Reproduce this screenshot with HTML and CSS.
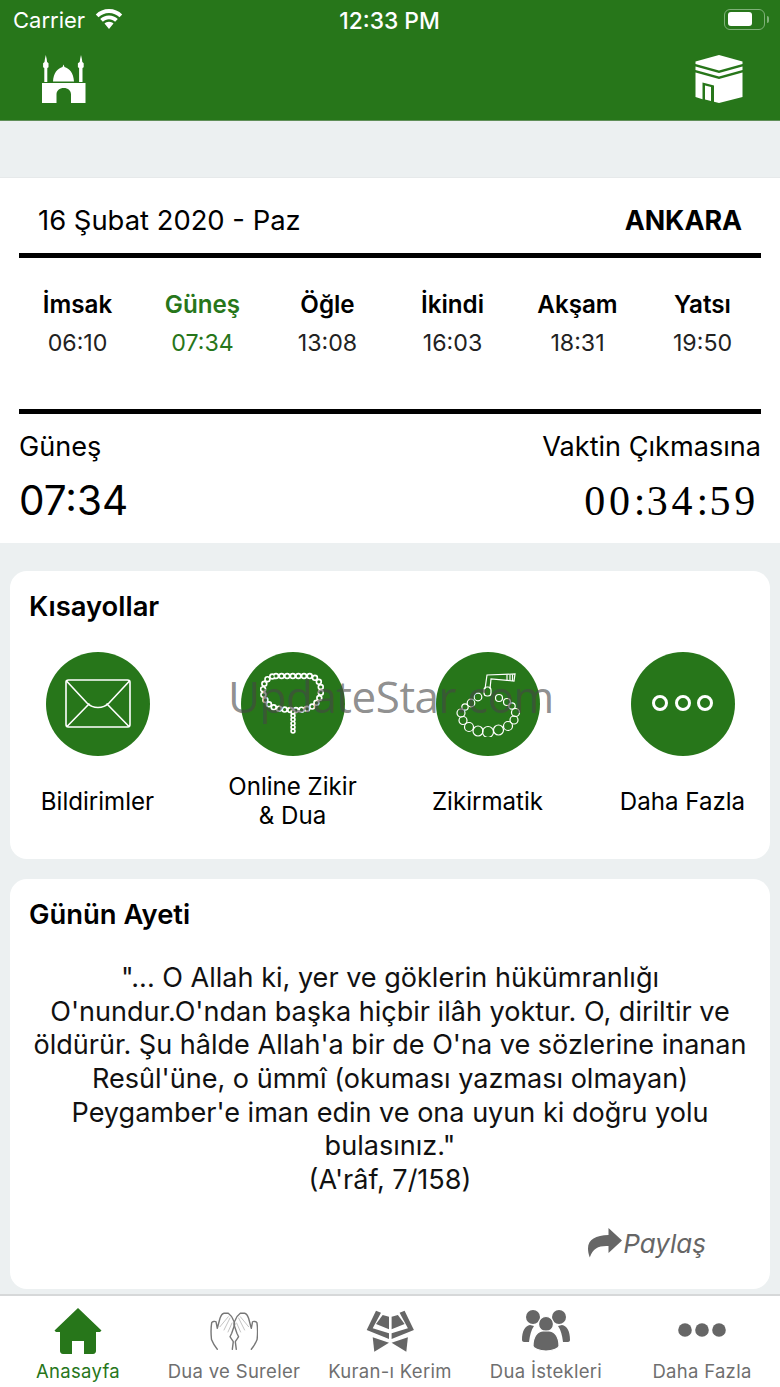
FILE: index.html
```html
<!DOCTYPE html>
<html lang="tr">
<head>
<meta charset="utf-8">
<title>Anasayfa</title>
<link rel="stylesheet" href="styles.css">
</head>
<body>
<div class="screen">
  <header class="header">
    <div class="status">
      <div class="status-left">
        <span>Carrier</span>
        <svg class="wifi" viewBox="0 0 28 22" width="28" height="22"><g fill="#fff"><path d="M14 1C8.800 1 4.200 3 .8 6.400l2.700 2.800C6.200 6.500 9.900 4.900 14 4.900s7.800 1.600 10.500 4.300l2.700-2.800C23.800 3 19.200 1 14 1z"/><path d="M14 7.400c-3.400 0-6.500 1.300-8.800 3.500l2.700 2.800c1.600-1.500 3.700-2.400 6.100-2.400s4.500.9 6.100 2.400l2.700-2.800c-2.300-2.200-5.400-3.500-8.800-3.500z"/><path d="M14 13.700c-1.800 0-3.300.7-4.500 1.800L14 21l4.500-5.500c-1.200-1.100-2.700-1.800-4.500-1.800z"/></g></svg>
      </div>
      <div class="status-time">12:33 PM</div>
      <div class="status-right">
        <span class="battery"><span class="battery-fill"></span></span><span class="battery-cap"></span>
      </div>
    </div>
    <div class="nav">
      <svg class="mosque" viewBox="0 0 44 49" width="44" height="49"><g fill="#fff"><path d="M3.800 0l.9 4 .4 3 1.400 1.200v4l-1.200.8V27H2.300V13l-1.200-.8v-4L2.500 7l.4-3z"/><path d="M39 0l.9 4 .4 3 1.400 1.200v4l-1.200.8V27h-3.400V13l-1.200-.8v-4L37.700 7l.4-3z"/><path d="M21.500 9.500l1 2.600C27.500 13.500 31.500 18 32 26.500H11c.5-8.500 4.500-13 9.500-14.400z"/><path d="M0 28h43.500v20H29V39.500c0-4-3-6.500-7.200-6.500S14.500 35.500 14.500 39.500V48H0z"/></g></svg>
      <svg class="kaaba" viewBox="0 0 48 48" width="48" height="48"><g fill="#fff"><path d="M24 0l23.500 6.500v2.500L24 15.500 .5 9V6.500z"/><path d="M.5 11.500L24 18l23.500-6.500v3.500L24 21.500 .5 15z"/><path d="M.5 17.500L24 24l23.500-6.500V42L24 48l-5-1.300V30.500L7.500 27.500v16.700L.5 42z"/><path d="M10 30.500l6 1.500v14l-6-1.500z"/></g></svg>
    </div>
  </header>

  <div class="band"></div>

  <section class="prayer">
    <div class="date-row">
      <span class="date">16 Şubat 2020 - Paz</span>
      <strong class="city">ANKARA</strong>
    </div>
    <div class="times">
      <div class="time"><b>İmsak</b><span>06:10</span></div>
      <div class="time active"><b>Güneş</b><span>07:34</span></div>
      <div class="time"><b>Öğle</b><span>13:08</span></div>
      <div class="time"><b>İkindi</b><span>16:03</span></div>
      <div class="time"><b>Akşam</b><span>18:31</span></div>
      <div class="time"><b>Yatsı</b><span>19:50</span></div>
    </div>
    <div class="next">
      <div class="next-col">
        <span class="next-label">Güneş</span>
        <span class="next-time">07:34</span>
      </div>
      <div class="next-col right">
        <span class="next-label">Vaktin Çıkmasına</span>
        <span class="count">00<span class="colon">:</span>34<span class="colon">:</span>59</span>
      </div>
    </div>
  </section>

  <section class="card shortcuts">
    <h2 class="card-title">Kısayollar</h2>
    <div class="shortcut-row">
      <div class="shortcut">
        <div class="circle"><svg viewBox="0 0 66 50" width="66" height="50" fill="none" stroke="#fff" stroke-width="1.600" stroke-linecap="round"><rect x="1" y="1" width="64" height="47" rx="2.500"/><path d="M1.500 2L22 24c6 6 16 6 22 0L64.500 2"/><path d="M24 25L2 47.500M42 25l22 22.500"/></svg></div>
        <span>Bildirimler</span>
      </div>
      <div class="shortcut">
        <div class="circle"><svg viewBox="0 0 66 66" width="66" height="66" fill="none" stroke-linecap="round"><path class="loop-white" d="M16 5H48C56 5 61 11 61 19C61 27 56 36 46 38C36 40 24 39 16 37C8 35 3 28 3 20C3 11 8 5 16 5z"/><path class="loop-green" d="M16 5H48C56 5 61 11 61 19C61 27 56 36 46 38C36 40 24 39 16 37C8 35 3 28 3 20C3 11 8 5 16 5z"/><path class="tail-white" d="M33 41V63"/><path class="tail-green" d="M33 41V63"/></svg></div>
        <span>Online Zikir<br>&amp; Dua</span>
      </div>
      <div class="shortcut">
        <div class="circle"><svg viewBox="0 0 66 66" width="66" height="66" fill="none" stroke="#fff" stroke-width="1.200"><path d="M30 18L32 4 60 3 59 10 36 8 35 18"/><path d="M52 3.500v6.500M55 3.500v6.500M57.500 3.500v6.500"/><rect x="29" y="16" width="7" height="9" rx="3"/><circle cx="23" cy="26" r="3.800"/><circle cx="16" cy="32" r="3.800"/><circle cx="10" cy="36" r="3.200"/><circle cx="6" cy="42" r="4"/><circle cx="8" cy="49.500" r="4"/><circle cx="14" cy="56" r="4.500"/><circle cx="23" cy="60" r="5"/><circle cx="33" cy="61" r="5.500"/><circle cx="43.500" cy="59" r="5"/><circle cx="53" cy="55" r="4.500"/><circle cx="59" cy="49" r="4"/><circle cx="60.500" cy="41.500" r="4"/><circle cx="57" cy="35" r="3.200"/><circle cx="52" cy="31" r="3.500"/><circle cx="44" cy="27" r="3.500"/></svg></div>
        <span>Zikirmatik</span>
      </div>
      <div class="shortcut">
        <div class="circle"><div class="rings"><i></i><i></i><i></i></div></div>
        <span>Daha Fazla</span>
      </div>
    </div>
  </section>

  <section class="card verse">
    <h2 class="card-title">Günün Ayeti</h2>
    <p class="verse-text">"... O Allah ki, yer ve göklerin hükümranlığı O'nundur.O'ndan başka hiçbir ilâh yoktur. O, diriltir ve öldürür. Şu hâlde Allah'a bir de O'na ve sözlerine inanan Resûl'üne, o ümmî (okuması yazması olmayan) Peygamber'e iman edin ve ona uyun ki doğru yolu bulasınız."<br>(A'râf, 7/158)</p>
    <div class="share">
      <svg viewBox="0 0 34 30" width="34" height="30"><path d="M20.500 0L34 12.500 20.500 25v-7C11 17.500 5 20 1.800 29.500 .5 26 0 23 0 20.500 0 11 8 7.500 20.500 7z" fill="#666"/></svg>
      <em>Paylaş</em>
    </div>
  </section>

  <nav class="tabs">
    <div class="tab current">
      <svg viewBox="0 0 48 46" width="48" height="46"><path d="M24 0L47.500 22.500 46 24h-4v19c0 1.500-1 3-3 3H30V33H18v13H9c-2 0-3-1.500-3-3V24H2L.5 22.500z" fill="#27761a"/></svg>
      <span>Anasayfa</span>
    </div>
    <div class="tab">
      <svg viewBox="0 0 48 46" width="48" height="46"><g fill="none" stroke="#777" stroke-width="1.400" stroke-linecap="round" stroke-linejoin="round"><path d="M7.300 41.300C4.500 38 2.500 34 1.500 31.500 1 27 1 19 1.700 14.700 2.500 13.500 5 13 6 13.700L7.300 20.300 10 10.300C11 7.500 12.500 5.500 14 5.300L18.300 5.300C20.500 7 22.500 9.500 23.300 12 24.500 14 25 15.500 24.500 17L21.700 25.300 20 28.700C21 30.500 22.500 32 23.300 33.700L22.300 41.300"/><path d="M10 18.700L18.300 8.700M14 22L20 10M18 24L22 15" stroke="#c4c4c4" stroke-width="1"/></g><g fill="none" stroke="#777" stroke-width="1.400" stroke-linecap="round" stroke-linejoin="round" transform="matrix(-1 0 0 1 48.600 0)"><path d="M7.300 41.300C4.500 38 2.500 34 1.500 31.500 1 27 1 19 1.700 14.700 2.500 13.500 5 13 6 13.700L7.300 20.300 10 10.300C11 7.500 12.500 5.500 14 5.300L18.300 5.300C20.500 7 22.500 9.500 23.300 12 24.500 14 25 15.500 24.500 17L21.700 25.300 20 28.700C21 30.500 22.500 32 23.300 33.700L22.300 41.300"/><path d="M10 18.700L18.300 8.700M14 22L20 10M18 24L22 15" stroke="#c4c4c4" stroke-width="1"/></g></svg>
      <span>Dua ve Sureler</span>
    </div>
    <div class="tab">
      <svg viewBox="0 0 48 46" width="48" height="46"><g fill="#666"><path d="M10 2.700L15 4.700 6.700 20.300 23 25.300V31L.7 22z"/><path d="M16.700 7L23 8.700V21.300L10 16z"/><path d="M6.700 29.300L23 34.700 8.300 43.700z"/></g><g fill="#666" transform="matrix(-1 0 0 1 48.600 0)"><path d="M10 2.700L15 4.700 6.700 20.300 23 25.300V31L.7 22z"/><path d="M16.700 7L23 8.700V21.300L10 16z"/><path d="M6.700 29.300L23 34.700 8.300 43.700z"/></g></svg>
      <span>Kuran-ı Kerim</span>
    </div>
    <div class="tab">
      <svg viewBox="0 0 48 46" width="48" height="46"><g fill="#666"><circle cx="11" cy="9" r="7"/><circle cx="37" cy="9" r="7"/><path d="M0 32c0-9 3-14 8-15l4 1c-3 4-4 9-5 16H2c-1 0-2-1-2-2z"/><path d="M48 32c0-9-3-14-8-15l-4 1c3 4 4 9 5 16h5c1 0 2-1 2-2z"/></g><circle cx="24" cy="16" r="7.500" fill="#666" stroke="#fff" stroke-width="1.200"/><path d="M11 38c0-10 5-15 10-15h6c5 0 10 5 10 15 0 2-6 5-13 5s-13-3-13-5z" fill="#666" stroke="#fff" stroke-width="1.200"/></svg>
      <span>Dua İstekleri</span>
    </div>
    <div class="tab">
      <svg viewBox="0 0 48 46" width="48" height="46"><g fill="#666"><circle cx="7" cy="22" r="6.800"/><circle cx="24" cy="22" r="6.800"/><circle cx="41" cy="22" r="6.800"/></g></svg>
      <span>Daha Fazla</span>
    </div>
  </nav>

  <div class="watermark">UpdateStar.com</div>
</div>
</body>
</html>
```
FILE: styles.css
```css
* { box-sizing: border-box; }
html, body { margin: 0; padding: 0; }
body { font-family: Inter, "Liberation Sans", sans-serif; color: #000; background: #ecf0f1; }
.screen { position: relative; width: 780px; height: 1387px; overflow: hidden; background: #ecf0f1; display: flex; flex-direction: column; }

.header { height: 121px; background: #27761a; border-bottom: 1px solid #5f8f58; color: #fff; display: flex; flex-direction: column; flex: none; }
.status { height: 40px; padding: 0 11px 0 13px; display: grid; grid-template-columns: 1fr auto 1fr; align-items: center; }
.status-left { display: flex; align-items: center; gap: 10px; font-size: 22px; }
.wifi { margin-top: -3px; }
.status-time { font-weight: 500; font-size: 22.800px; margin: 0 1px 0 -2px; }
.status-right { display: flex; justify-content: flex-end; align-items: center; }
.battery { width: 41px; height: 21px; border: 1.500px solid #7fb178; border-radius: 6px; padding: 2.500px; display: flex; margin-top: -2px; }
.battery-fill { width: 24px; height: 100%; background: #fff; border-radius: 3px; }
.battery-cap { width: 2px; height: 7px; background: #7fb178; border-radius: 0 2px 2px 0; margin: -2px 0 0 2px; }
.nav { display: flex; justify-content: space-between; align-items: flex-start; padding: 15px 37px 0 42px; }

.band { height: 56px; flex: none; background: #ecf0f1; }

.prayer { height: 366px; flex: none; background: #fff; border-top: 1px solid #e6e9ea; padding: 0 19px; display: flex; flex-direction: column; }
.date-row { height: 80px; flex: none; padding: 9px 19px 0; border-bottom: 5px solid #000; display: flex; justify-content: space-between; align-items: center; font-size: 27.400px; }
.city { font-weight: 700; font-size: 26.800px; }
.times { height: 156px; flex: none; padding: 33px 0 0; border-bottom: 5px solid #000; display: grid; grid-template-columns: repeat(6, 125px); justify-content: center; }
.time { display: flex; flex-direction: column; align-items: center; gap: 10px; font-size: 24.200px; line-height: 28px; }
.time b { font-weight: 600; }
.time span { font-size: 23.200px; color: #222; }
.time.active b, .time.active span { color: #27761a; }
.next { display: flex; justify-content: space-between; padding: 15px 0 0; }
.next-col { display: flex; flex-direction: column; gap: 11px; }
.next-col.right { align-items: flex-end; }
.next-label { font-size: 27.100px; line-height: 36px; }
.next-time { font-size: 40.500px; line-height: 50px; }
.count { font-family: "Liberation Serif", serif; font-size: 42px; line-height: 50px; letter-spacing: 3.800px; margin-right: 2px; }
.colon { letter-spacing: 1.300px; }

.card { background: #fff; border-radius: 17px; margin: 0 10px; flex: none; }
.card-title { margin: 0; font-size: 27.400px; line-height: 34px; font-weight: 600; }
.shortcuts { height: 288px; margin-top: 28px; padding: 18px 0 0 19px; }
.shortcut-row { display: grid; grid-template-columns: repeat(4, 195px); margin: 29px 0 0 -29px; }
.shortcut { display: flex; flex-direction: column; align-items: center; text-align: center; font-size: 24.100px; line-height: 29px; }
.shortcut span { height: 58px; display: flex; align-items: center; margin-top: 16px; }
.circle { width: 104px; height: 104px; border-radius: 50%; background: #27761a; display: flex; align-items: center; justify-content: center; }
.loop-white { stroke: #fff; stroke-width: 6.500; stroke-dasharray: 0 5.600; }
.loop-green { stroke: #27761a; stroke-width: 3.200; stroke-dasharray: 0 5.600; }
.tail-white { stroke: #fff; stroke-width: 5.500; stroke-dasharray: 0 3.800; }
.tail-green { stroke: #27761a; stroke-width: 2.200; stroke-dasharray: 0 3.800; }
.rings { display: flex; gap: 6.500px; margin-top: -2px; }
.rings i { width: 16px; height: 16px; border: 3px solid #fff; border-radius: 50%; }

.verse { height: 410px; margin-top: 20px; padding: 18px 19px 0; }
.verse-text { margin: 30px 0 0; text-align: center; font-size: 27.050px; line-height: 33.650px; color: #111; }
.share { display: flex; align-items: center; justify-content: flex-end; gap: 1px; margin: 31px 45px 0 0; color: #666; }
.share em { font-size: 26px; }

.tabs { position: absolute; left: 0; right: 0; bottom: 0; height: 93px; background: #fff; border-top: 2px solid #d6d8d9; display: grid; grid-template-columns: repeat(5, 156px); }
.tab { display: flex; flex-direction: column; align-items: center; font-size: 18.500px; color: #6f6f6f; padding-top: 12px; gap: 6px; letter-spacing: .3px; white-space: nowrap; }
.tab svg { height: 46px; width: 48px; flex: none; }
.tab.current { color: #27761a; }

.watermark { position: absolute; left: 228px; top: 665px; font-family: "Open Sans", sans-serif; font-size: 44px; line-height: 62px; letter-spacing: -.5px; color: rgba(70, 70, 70, .62); pointer-events: none; }
```
